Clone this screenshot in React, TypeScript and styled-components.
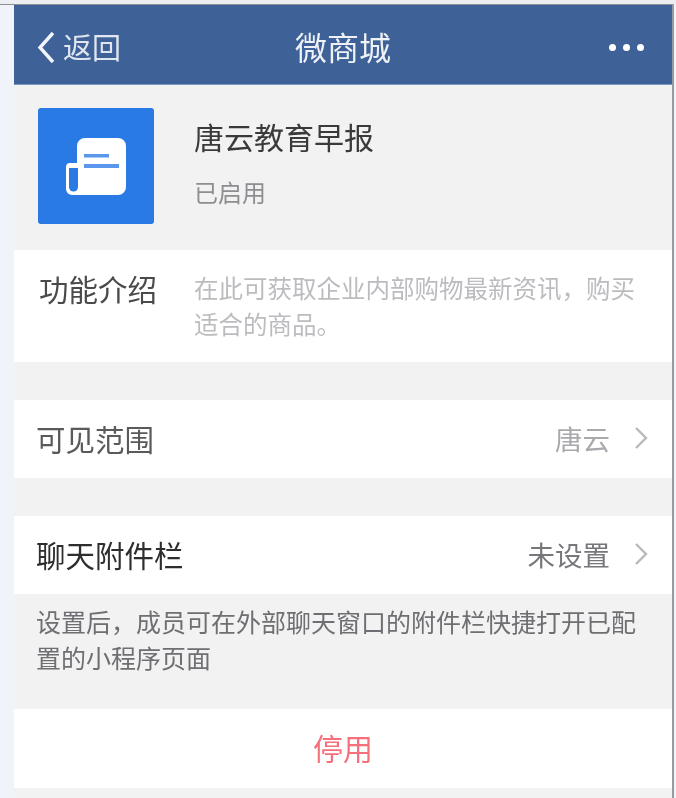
import React from "react"
import styled, { createGlobalStyle } from "styled-components"

const GlobalStyle = createGlobalStyle`
  html, body {
    margin: 0;
    padding: 0;
    background: #f0f4fa;
    font-family: "Liberation Sans", "Noto Sans CJK SC", sans-serif;
  }
`

const Page = styled.div`
  width: 676px;
  height: 798px;
  overflow: hidden;
  box-sizing: border-box;
  padding-top: 4px;
  background: linear-gradient(#eceef1 0 4px, #f0f4fa 4px);
`

const Phone = styled.div`
  width: 674px;
  height: 794px;
  box-sizing: border-box;
  border-top: 1px solid #8f8f91;
  border-right: 2px solid #9b9b9d;
  padding-left: 14px;
  background: #f0f4fa;
`

const Screen = styled.div`
  background: #f2f2f2;
  height: 100%;
  display: flex;
  flex-direction: column;
  filter: blur(0.5px);
`

const NavBar = styled.div`
  height: 80px;
  flex: none;
  box-sizing: border-box;
  background: #3e6197;
  border-bottom: 1px solid #7e98bd;
  display: grid;
  grid-template-columns: 1fr auto 1fr;
  align-items: center;
  padding: 3px 23px 0;
  color: #fff;
`

const Back = styled.div`
  display: flex;
  align-items: center;
  gap: 8px;
  font-size: 29px;
  color: #dfe6f0;

  svg {
    margin-top: 2px;
  }
`

const Title = styled.div`
  font-size: 32px;
  color: #eef2f7;
`

const Dots = styled.div`
  display: flex;
  justify-content: flex-end;
  gap: 7px;
  padding: 2px 5px 0 0;
`

const Dot = styled.span`
  width: 7px;
  height: 7px;
  border-radius: 50%;
  background: #fff;
`

const AppHeader = styled.div`
  height: 165px;
  flex: none;
  box-sizing: border-box;
  display: flex;
  padding: 23px 24px 0;
  gap: 40px;
`

const AppIcon = styled.div`
  width: 116px;
  height: 116px;
  border-radius: 3px;
  background: #2a7ae6;
  display: flex;
  align-items: center;
  justify-content: center;
`

const AppInfo = styled.div`
  display: flex;
  flex-direction: column;
  padding-top: 11px;
`

const AppName = styled.div`
  font-size: 30px;
  line-height: 40px;
  color: #3a3a3a;
`

const AppState = styled.div`
  font-size: 24px;
  line-height: 34px;
  margin-top: 18px;
  color: #8e8e92;
`

const Intro = styled.div`
  flex: none;
  height: 112px;
  box-sizing: border-box;
  background: #fff;
  display: flex;
  padding: 22px 30px 0 25px;
`

const IntroLabel = styled.div`
  flex: none;
  width: 155px;
  font-size: 29.5px;
  line-height: 38px;
  color: #4a4a4a;
`

const IntroText = styled.div`
  font-size: 24.5px;
  line-height: 36px;
  color: #bcbcc0;
`

const Row = styled.div`
  flex: none;
  height: 78px;
  box-sizing: border-box;
  margin-top: 38px;
  background: #fff;
  display: flex;
  align-items: center;
  justify-content: space-between;
  padding: 0 24px 2px 22px;
`

const RowLabel = styled.div<{ $dark?: boolean }>`
  font-size: 29.5px;
  color: ${(p) => (p.$dark ? "#2e2e2e" : "#5a5a5a")};
`

const RowValue = styled.div<{ $dark?: boolean }>`
  display: flex;
  align-items: center;
  gap: 23px;
  font-size: 27.5px;
  color: ${(p) => (p.$dark ? "#77777b" : "#a9a9ad")};
`

const Hint = styled.div`
  flex: none;
  height: 115px;
  box-sizing: border-box;
  padding: 11px 30px 0 22px;
  font-size: 25px;
  line-height: 36px;
  color: #6f6f73;
`

const StopButton = styled.div`
  flex: none;
  height: 79px;
  box-sizing: border-box;
  padding-bottom: 4px;
  background: #fff;
  display: flex;
  align-items: center;
  justify-content: center;
  font-size: 30px;
  color: #f6707c;
`

function Chevron() {
  return (
    <svg width="15" height="24" viewBox="0 0 15 24" fill="none">
      <path d="M3 2l10 10L3 22" stroke="#b9b9bd" strokeWidth="2.4" />
    </svg>
  )
}

function NewsIcon() {
  return (
    <svg width="60" height="57" viewBox="0 0 60 57">
      <path
        d="M19 0H52a8 8 0 0 1 8 8V49a8 8 0 0 1-8 8H6a6 6 0 0 1-6-6V29a4 4 0 0 1 4-4H11V8a8 8 0 0 1 8-8z"
        fill="#fff"
      />
      <path d="M3 30h9v19a4.5 4.5 0 0 1-9 0z" fill="#2a7ae6" />
      <rect x="18" y="16" width="25" height="3.5" fill="#5a97ec" />
      <rect x="18" y="26" width="35" height="4" fill="#5a97ec" />
    </svg>
  )
}

export default function App() {
  return (
    <Page>
      <GlobalStyle />
      <Phone>
        <Screen>
          <NavBar>
            <Back>
              <svg width="18" height="33" viewBox="0 0 18 33" fill="none">
                <path d="M16 2L3 16.5 16 31" stroke="#f2f5f9" strokeWidth="3.4" />
              </svg>
              返回
            </Back>
            <Title>微商城</Title>
            <Dots>
              <Dot />
              <Dot />
              <Dot />
            </Dots>
          </NavBar>
          <AppHeader>
            <AppIcon>
              <NewsIcon />
            </AppIcon>
            <AppInfo>
              <AppName>唐云教育早报</AppName>
              <AppState>已启用</AppState>
            </AppInfo>
          </AppHeader>
          <Intro>
            <IntroLabel>功能介绍</IntroLabel>
            <IntroText>在此可获取企业内部购物最新资讯，购买适合的商品。</IntroText>
          </Intro>
          <Row>
            <RowLabel>可见范围</RowLabel>
            <RowValue>
              唐云
              <Chevron />
            </RowValue>
          </Row>
          <Row>
            <RowLabel $dark>聊天附件栏</RowLabel>
            <RowValue $dark>
              未设置
              <Chevron />
            </RowValue>
          </Row>
          <Hint>设置后，成员可在外部聊天窗口的附件栏快捷打开已配置的小程序页面</Hint>
          <StopButton>停用</StopButton>
        </Screen>
      </Phone>
    </Page>
  )
}
